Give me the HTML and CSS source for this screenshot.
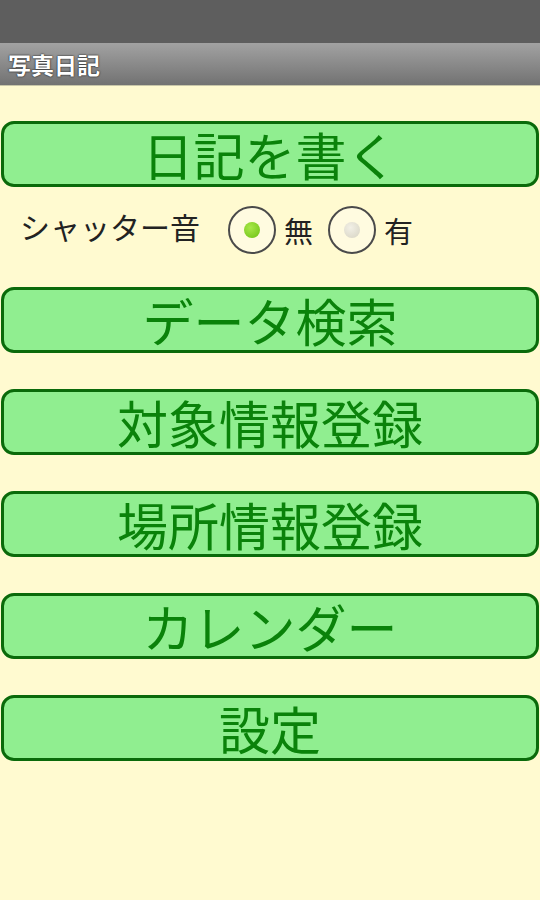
FILE: index.html
```html
<!DOCTYPE html>
<html lang="ja">

<head>
    <meta charset="UTF-8">
    <meta name="viewport" content="width=device-width, initial-scale=1.0">
    <title>写真日記</title>
    <link rel="stylesheet" href="styles.css">
</head>

<body>
    <div class="status-bar"></div>
    <div class="title-bar">写真日記</div>

    <div class="menu">
        <button class="menu-btn">日記を書く</button>

        <div class="shutter">
            <span class="shutter-label">シャッター音</span>
            <label class="radio">
                <span class="radio-circle checked"><span class="dot"></span></span>
                <span class="radio-text">無</span>
            </label>
            <label class="radio">
                <span class="radio-circle"><span class="dot"></span></span>
                <span class="radio-text">有</span>
            </label>
        </div>

        <button class="menu-btn">データ検索</button>
        <button class="menu-btn">対象情報登録</button>
        <button class="menu-btn">場所情報登録</button>
        <button class="menu-btn">カレンダー</button>
        <button class="menu-btn">設定</button>
    </div>
</body>

</html>
```

FILE: styles.css
```css
body {
    margin: 0;
    height: 900px;
    background: #fffad0;
    font-family: "Noto Sans CJK JP", "Noto Sans", sans-serif;
}

.status-bar {
    height: 43px;
    background: #5e5e5e;
}

.title-bar {
    height: 42px;
    padding-left: 8px;
    display: flex;
    align-items: center;
    background: linear-gradient(#a2a2a2, #727272);
    border-bottom: 1px solid #c8c6a8;
    color: #fff;
    font-size: 23px;
    font-weight: bold;
    text-shadow: 0 0 2px #222, 0 0 1px #222;
}

.menu {
    display: flex;
    flex-direction: column;
    padding: 35px 1px 0;
}

.menu-btn {
    height: 66px;
    margin-bottom: 36px;
    border: 3px solid #0a6a0a;
    border-radius: 13px;
    background: #90ee90;
    color: #0a820a;
    font-family: inherit;
    font-size: 51px;
    line-height: 1;
    padding: 0;
}

.shutter {
    display: flex;
    align-items: center;
    height: 46px;
    margin: -16px 0 34px;
    padding-left: 19px;
}

.shutter-label {
    font-size: 30px;
    color: #222;
    margin-right: 28px;
    position: relative;
    top: -4px;
}

.radio {
    display: flex;
    align-items: center;
    margin-right: 15px;
}

.radio-circle {
    width: 44px;
    height: 44px;
    border: 2px solid #4a4a4a;
    border-radius: 50%;
    display: flex;
    justify-content: center;
    align-items: center;
    background: #fffbe0;
}

.dot {
    width: 16px;
    height: 16px;
    border-radius: 50%;
    background: radial-gradient(circle at 40% 35%, #f2f0e6, #d6d3c2);
}

.radio-circle.checked .dot {
    background: radial-gradient(circle at 40% 35%, #a8e84a, #6cc012);
}

.radio-text {
    font-size: 29px;
    color: #222;
    margin-left: 8px;
}
```
